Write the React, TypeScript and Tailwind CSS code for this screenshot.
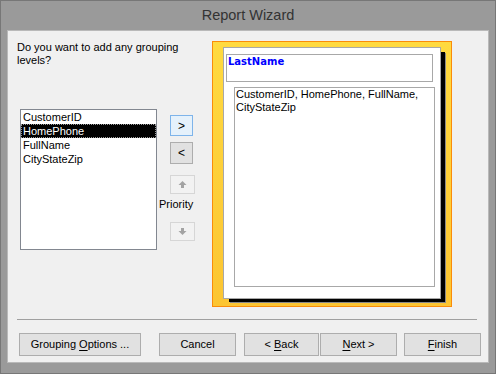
import type { ReactNode } from "react";

const fields = ["CustomerID", "HomePhone", "FullName", "CityStateZip"];

function Arrow({ down = false }: { down?: boolean }) {
  return (
    <svg width="9" height="9" viewBox="0 0 9 9" className={down ? "rotate-180" : ""}>
      <polygon points="4.5,1 8.5,5 6,5 6,8 3,8 3,5 0.5,5" fill="#a3a3a3" />
    </svg>
  );
}

function Button({ children, className = "" }: { children: ReactNode; className?: string }) {
  return (
    <div
      className={`flex h-[23px] items-center justify-center border border-[#adadad] bg-[#e1e1e1] text-[11px] leading-[13px] text-black ${className}`}
    >
      <span>{children}</span>
    </div>
  );
}

function Key({ children }: { children: ReactNode }) {
  return <span className="underline underline-offset-[2px]">{children}</span>;
}

export default function App() {
  return (
    <div className="flex h-[374px] w-[496px] flex-col border border-[#777] bg-[#9a9a9a] font-['Liberation_Sans',Arial,sans-serif] text-black">
      <div className="flex h-[29px] items-center justify-center text-[14.5px] leading-[17px] text-[#333]">
        Report Wizard
      </div>

      <div className="mx-[6px] h-[333px] border border-[#b9b9b9] bg-[#f0f0f0]">
        <div className="flex h-[288px]">
          {/* left side: question, field list, move buttons */}
          <div className="w-[204px] shrink-0 pl-[9px]">
            <p className="mt-[10px] text-[11px] leading-[13px]">
              Do you want to add any grouping
              <br />
              levels?
            </p>

            <div className="mt-[42px] flex">
              <div className="ml-[3px] h-[141px] w-[137px] border border-[#828790] bg-white text-[11px] leading-[14px]">
                {fields.map((f) =>
                  f === "HomePhone" ? (
                    <div
                      key={f}
                      className="h-[14px] bg-black pl-[2px] text-white outline-1 -outline-offset-1 outline-dotted outline-[#9a9a9a]"
                    >
                      {f}
                    </div>
                  ) : (
                    <div key={f} className="h-[14px] pl-[2px]">
                      {f}
                    </div>
                  )
                )}
              </div>

              <div className="ml-[2px] flex flex-col">
                <div className="ml-[11px] mt-[6px] flex h-[21px] w-[23px] items-center justify-center border border-[#7eb4ea] bg-[#e5f1fb] text-[12px]">
                  &gt;
                </div>
                <div className="ml-[11px] mt-[6px] flex h-[22px] w-[23px] items-center justify-center border border-[#adadad] bg-[#e1e1e1] text-[12px]">
                  &lt;
                </div>
                <div className="ml-[11px] mt-[11px] flex h-[19px] w-[25px] items-center justify-center border border-[#d6d6d6] bg-[#f2f2f2]">
                  <Arrow />
                </div>
                <div className="mt-[4px] h-[13px] text-[11px] leading-[13px]">Priority</div>
                <div className="ml-[11px] mt-[11px] flex h-[19px] w-[25px] items-center justify-center border border-[#d6d6d6] bg-[#f2f2f2]">
                  <Arrow down />
                </div>
              </div>
            </div>
          </div>

          {/* report preview */}
          <div className="mt-[10px] h-[266px] w-[240px] border border-[#fa8c0a] bg-linear-to-b from-[#ffda40] to-[#fcc532] pl-[10px] pt-[5px]">
            <div className="h-[252px] w-[218px] border border-[#a8a8a8] bg-white shadow-[5px_4px_0_-1px_#000,6px_5px_0_-1px_#8a8a8a]">
              <div className="ml-[2px] mt-[6px] h-[28px] w-[207px] border border-[#a8a8a8] pl-[1px] pt-[1px] font-['DejaVu_Sans',sans-serif] text-[10px] font-bold leading-[12px] text-[#0000ff]">
                LastName
              </div>
              <div className="ml-[10px] mt-[5px] h-[200px] w-[201px] border border-[#a8a8a8] pl-[1px] text-[11px] leading-[13px]">
                CustomerID, HomePhone, FullName,
                <br />
                CityStateZip
              </div>
            </div>
          </div>
        </div>

        <div className="ml-[9px] h-px w-[460px] bg-[#a0a0a0]" />

        <div className="mt-[13px] flex">
          <Button className="ml-[11px] w-[122px]">
            Grouping <Key>O</Key>ptions ...
          </Button>
          <Button className="ml-[18px] w-[77px]">Cancel</Button>
          <Button className="ml-[8px] w-[75px]">
            &lt; <Key>B</Key>ack
          </Button>
          <Button className="ml-[1px] w-[77px] border-[#3c8fe6]">
            <Key>N</Key>ext &gt;
          </Button>
          <Button className="ml-[7px] w-[77px]">
            <Key>F</Key>inish
          </Button>
        </div>
      </div>
    </div>
  );
}
